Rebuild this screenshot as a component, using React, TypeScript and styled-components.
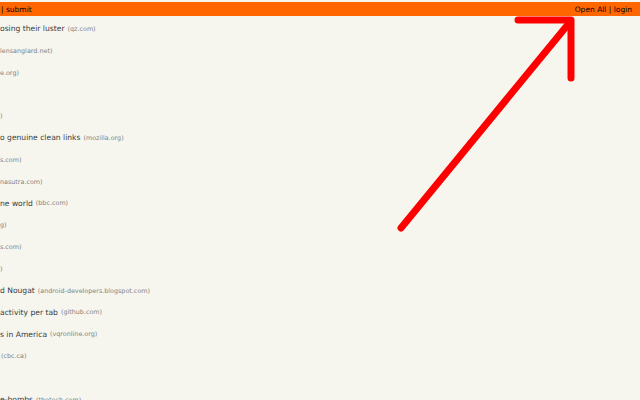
import React from "react";
import styled, { createGlobalStyle } from "styled-components";

const GlobalStyle = createGlobalStyle`
  html, body {
    margin: 0;
    padding: 0;
    background: #f6f6ef;
    overflow: hidden;
  }
  body {
    font-family: "DejaVu Sans", Verdana, sans-serif;
  }
`;

const Page = styled.div`
  position: relative;
  width: 640px;
  height: 400px;
  overflow: hidden;
  background: #f6f6ef;
  padding-top: 2px;
  box-sizing: border-box;
`;

const TopBar = styled.div`
  height: 14px;
  background: #ff6600;
  display: flex;
  align-items: center;
  justify-content: space-between;
  padding: 0 8px 0 1px;
  font-size: 7.5px;
  color: #000;
  line-height: 1;
`;

const BarLinks = styled.span`
  white-space: nowrap;
  padding-top: 1px;
`;

const List = styled.div`
  padding-top: 2px;
  display: flex;
  flex-direction: column;
`;

const Row = styled.div<{ $shift?: number }>`
  height: 21.82px;
  display: flex;
  align-items: center;
  white-space: nowrap;
  gap: 3px;
  margin-left: ${(p) => p.$shift ?? 0}px;
`;

const Title = styled.span`
  font-size: 7.6px;
  color: #3a3a3a;
`;

const Site = styled.span`
  font-size: 6.4px;
  color: #828282;
`;

const ArrowLayer = styled.svg`
  position: absolute;
  top: 0;
  left: 0;
  pointer-events: none;
`;

type Item = { title?: string; site?: string; shift?: number };

const items: Item[] = [
  { title: "osing their luster", site: "(qz.com)" },
  { site: "lensanglard.net)" },
  { site: "e.org)" },
  {},
  { site: ")" },
  { title: "o genuine clean links", site: "(mozilla.org)" },
  { site: "s.com)" },
  { site: "nasutra.com)" },
  { title: "ne world", site: "(bbc.com)" },
  { site: "g)" },
  { site: "s.com)" },
  { site: ")" },
  { title: "d Nougat", site: "(android-developers.blogspot.com)" },
  { title: "activity per tab", site: "(github.com)" },
  { title: "s in America", site: "(vqronline.org)" },
  { site: "(cbc.ca)", shift: 1 },
  {},
  { title: "e-bombs", site: "(thetech.com)" },
];

export default function App() {
  return (
    <>
      <GlobalStyle />
      <Page>
        <TopBar>
          <BarLinks>| submit</BarLinks>
          <BarLinks>Open All | login</BarLinks>
        </TopBar>
        <List>
          {items.map((it, i) => (
            <Row key={i} $shift={it.shift}>
              {it.title && <Title>{it.title}</Title>}
              {it.site && <Site>{it.site}</Site>}
            </Row>
          ))}
        </List>
        <ArrowLayer width="640" height="400" viewBox="0 0 640 400">
          <g
            stroke="#ff0000"
            strokeWidth="7"
            strokeLinecap="round"
            strokeLinejoin="round"
            fill="none"
          >
            <path d="M401 228 L570 22" />
            <path d="M518 20 L571 20 L571 78" />
          </g>
        </ArrowLayer>
      </Page>
    </>
  );
}
